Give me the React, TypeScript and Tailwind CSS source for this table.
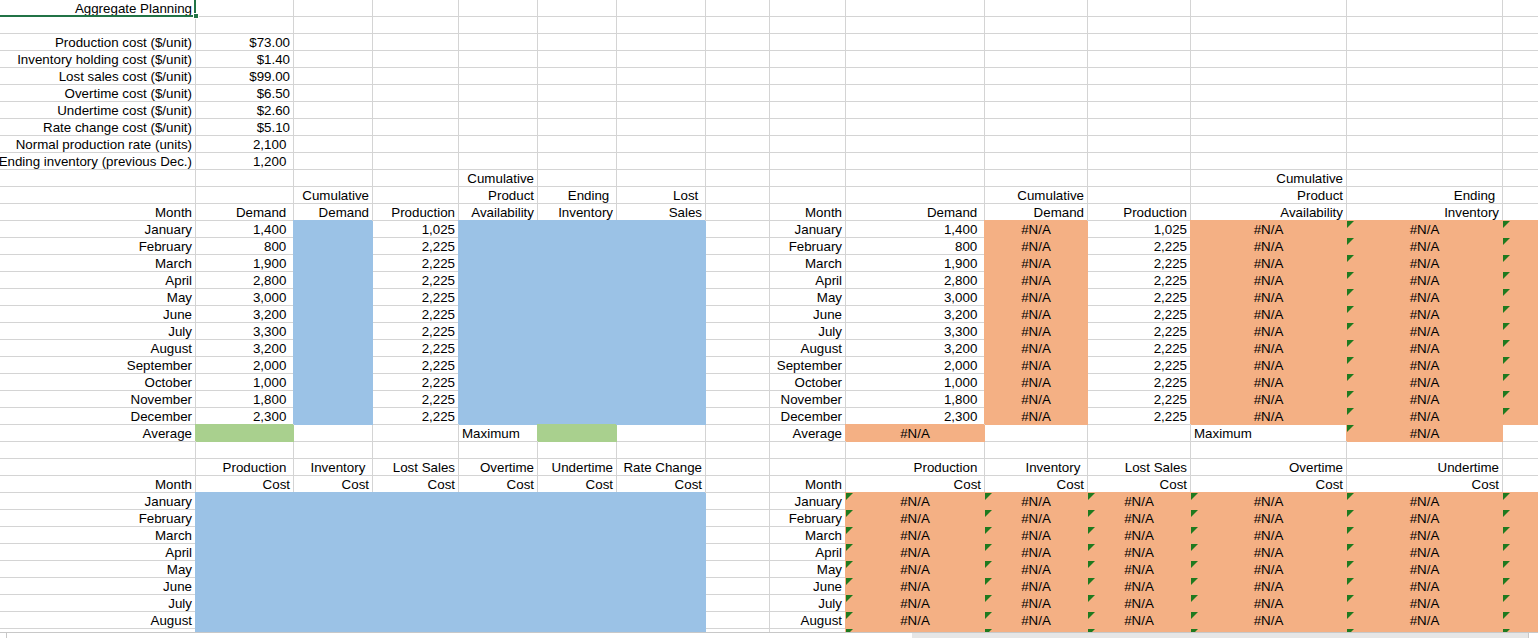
import clsx from 'clsx'

type Fill = 'blue' | 'green' | 'orange'
type Cell = { t?: string; a?: 'l' | 'r' | 'c'; f?: Fill; tri?: boolean; sel?: boolean }
type Row = Record<number, Cell>

const COLS = 15

const fillCls: Record<Fill, string> = {
  blue: 'bg-[#9bc2e6] border-[#9bc2e6] shadow-[-1px_-1px_0_0_#9bc2e6]',
  green: 'bg-[#a9d08e] border-[#a9d08e] shadow-[-1px_-1px_0_0_#a9d08e]',
  orange: 'bg-[#f4b084] border-[#f4b084] shadow-[-1px_-1px_0_0_#f4b084]',
}

const months = [
  'January', 'February', 'March', 'April', 'May', 'June',
  'July', 'August', 'September', 'October', 'November', 'December',
]
const demand = ['1,400', '800', '1,900', '2,800', '3,000', '3,200', '3,300', '3,200', '2,000', '1,000', '1,800', '2,300']
const production = ['1,025', ...Array(11).fill('2,225')]

const params: [string, string][] = [
  ['Production cost ($/unit)', '$73.00'],
  ['Inventory holding cost ($/unit)', '$1.40'],
  ['Lost sales cost ($/unit)', '$99.00'],
  ['Overtime cost ($/unit)', '$6.50'],
  ['Undertime cost ($/unit)', '$2.60'],
  ['Rate change cost ($/unit)', '$5.10'],
  ['Normal production rate (units)', '2,100 '],
  ['Ending inventory (previous Dec.)', '1,200 '],
]

const na = (tri = false): Cell => ({ t: '#N/A', a: 'c', f: 'orange', tri })

function buildRows(): Row[] {
  const rows: Row[] = []
  rows.push({ 0: { t: 'Aggregate Planning', sel: true } })
  rows.push({})
  params.forEach(([label, value]) => rows.push({ 0: { t: label }, 1: { t: value } }))
  rows.push({ 4: { t: 'Cumulative' }, 12: { t: 'Cumulative' } })
  rows.push({
    2: { t: 'Cumulative' }, 4: { t: 'Product' }, 5: { t: 'Ending ' }, 6: { t: 'Lost ' },
    10: { t: 'Cumulative' }, 12: { t: 'Product' }, 13: { t: 'Ending ' },
  })
  rows.push({
    0: { t: 'Month' }, 1: { t: 'Demand ' }, 2: { t: 'Demand' }, 3: { t: 'Production' },
    4: { t: 'Availability' }, 5: { t: 'Inventory' }, 6: { t: 'Sales' },
    8: { t: 'Month' }, 9: { t: 'Demand ' }, 10: { t: 'Demand' }, 11: { t: 'Production' },
    12: { t: 'Availability' }, 13: { t: 'Inventory' },
  })
  months.forEach((m, i) =>
    rows.push({
      0: { t: m }, 1: { t: demand[i] + ' ' }, 2: { f: 'blue' }, 3: { t: production[i] },
      4: { f: 'blue' }, 5: { f: 'blue' }, 6: { f: 'blue' },
      8: { t: m }, 9: { t: demand[i] + ' ' }, 10: na(), 11: { t: production[i] },
      12: na(), 13: na(true), 14: { f: 'orange', tri: true },
    })
  )
  rows.push({
    0: { t: 'Average' }, 1: { f: 'green' }, 4: { t: 'Maximum', a: 'l' }, 5: { f: 'green' },
    8: { t: 'Average' }, 9: na(), 12: { t: 'Maximum', a: 'l' }, 13: na(true),
  })
  rows.push({})
  rows.push({
    1: { t: 'Production ' }, 2: { t: 'Inventory ' }, 3: { t: 'Lost Sales' }, 4: { t: 'Overtime' },
    5: { t: 'Undertime' }, 6: { t: 'Rate Change' },
    9: { t: 'Production ' }, 10: { t: 'Inventory ' }, 11: { t: 'Lost Sales' }, 12: { t: 'Overtime' },
    13: { t: 'Undertime' },
  })
  rows.push({
    0: { t: 'Month' }, 1: { t: 'Cost' }, 2: { t: 'Cost' }, 3: { t: 'Cost' }, 4: { t: 'Cost' },
    5: { t: 'Cost' }, 6: { t: 'Cost' },
    8: { t: 'Month' }, 9: { t: 'Cost' }, 10: { t: 'Cost' }, 11: { t: 'Cost' }, 12: { t: 'Cost' },
    13: { t: 'Cost' },
  })
  months.slice(0, 8).forEach((m) =>
    rows.push({
      0: { t: m }, 1: { f: 'blue' }, 2: { f: 'blue' }, 3: { f: 'blue' }, 4: { f: 'blue' },
      5: { f: 'blue' }, 6: { f: 'blue' },
      8: { t: m }, 9: na(true), 10: na(true), 11: na(true), 12: na(true), 13: na(true),
      14: { f: 'orange', tri: true },
    })
  )
  // September row, only its top edge shows above the scroll bar
  const orangeTri: Cell = { f: 'orange', tri: true }
  rows.push({
    1: { f: 'blue' }, 2: { f: 'blue' }, 3: { f: 'blue' }, 4: { f: 'blue' }, 5: { f: 'blue' }, 6: { f: 'blue' },
    9: orangeTri, 10: orangeTri, 11: orangeTri, 12: orangeTri, 13: orangeTri, 14: orangeTri,
  })
  return rows
}

function SheetCell({ cell }: { cell?: Cell }) {
  const c = cell || {}
  const align =
    c.a === 'l' ? 'justify-start pl-[3px]' : c.a === 'c' ? 'justify-center' : 'justify-end pr-[3px]'
  return (
    <div
      className={clsx(
        'relative flex items-end h-[17px] border-r border-b whitespace-pre leading-[15px]',
        c.f ? fillCls[c.f] : 'border-[#d4d4d4]',
        align
      )}
    >
      {c.t}
      {c.tri && (
        <div className="absolute left-0 top-0 w-[7px] h-[7px] bg-[#1f7a1f] [clip-path:polygon(0_0,100%_0,0_100%)]" />
      )}
      {c.sel && (
        <>
          <div className="absolute left-0 top-0 right-[-1px] bottom-[-1px] border-r-2 border-b-2 border-[#217346] z-10" />
          <div className="absolute right-[-4px] bottom-[-3px] w-[6px] h-[6px] bg-[#217346] border border-white z-10" />
        </>
      )}
    </div>
  )
}

export default function App() {
  const rows = buildRows()
  return (
    <div className="w-[1538px] h-[638px] overflow-hidden bg-white text-black text-[13.33px] font-['Liberation_Sans',Arial,sans-serif] flex flex-col">
      <div className="h-[632px] overflow-hidden">
        <div className="grid grid-cols-[196px_98px_79px_86px_79px_79px_89px_64px_76px_139px_103px_103px_156px_156px_80px] w-[1584px]">
          {rows.map((row, r) =>
            Array.from({ length: COLS }, (_, c) => <SheetCell key={r + '-' + c} cell={row[c]} />)
          )}
        </div>
      </div>
      <div className="h-[6px] border-t border-[#c8c8c8] flex">
        <div className="w-[7px] border-r border-[#c8c8c8]" />
        <div className="w-[905px]" />
        <div className="w-[616px] bg-[#e6e6e6]" />
        <div className="flex-1 border-l border-[#c8c8c8]" />
      </div>
    </div>
  )
}
